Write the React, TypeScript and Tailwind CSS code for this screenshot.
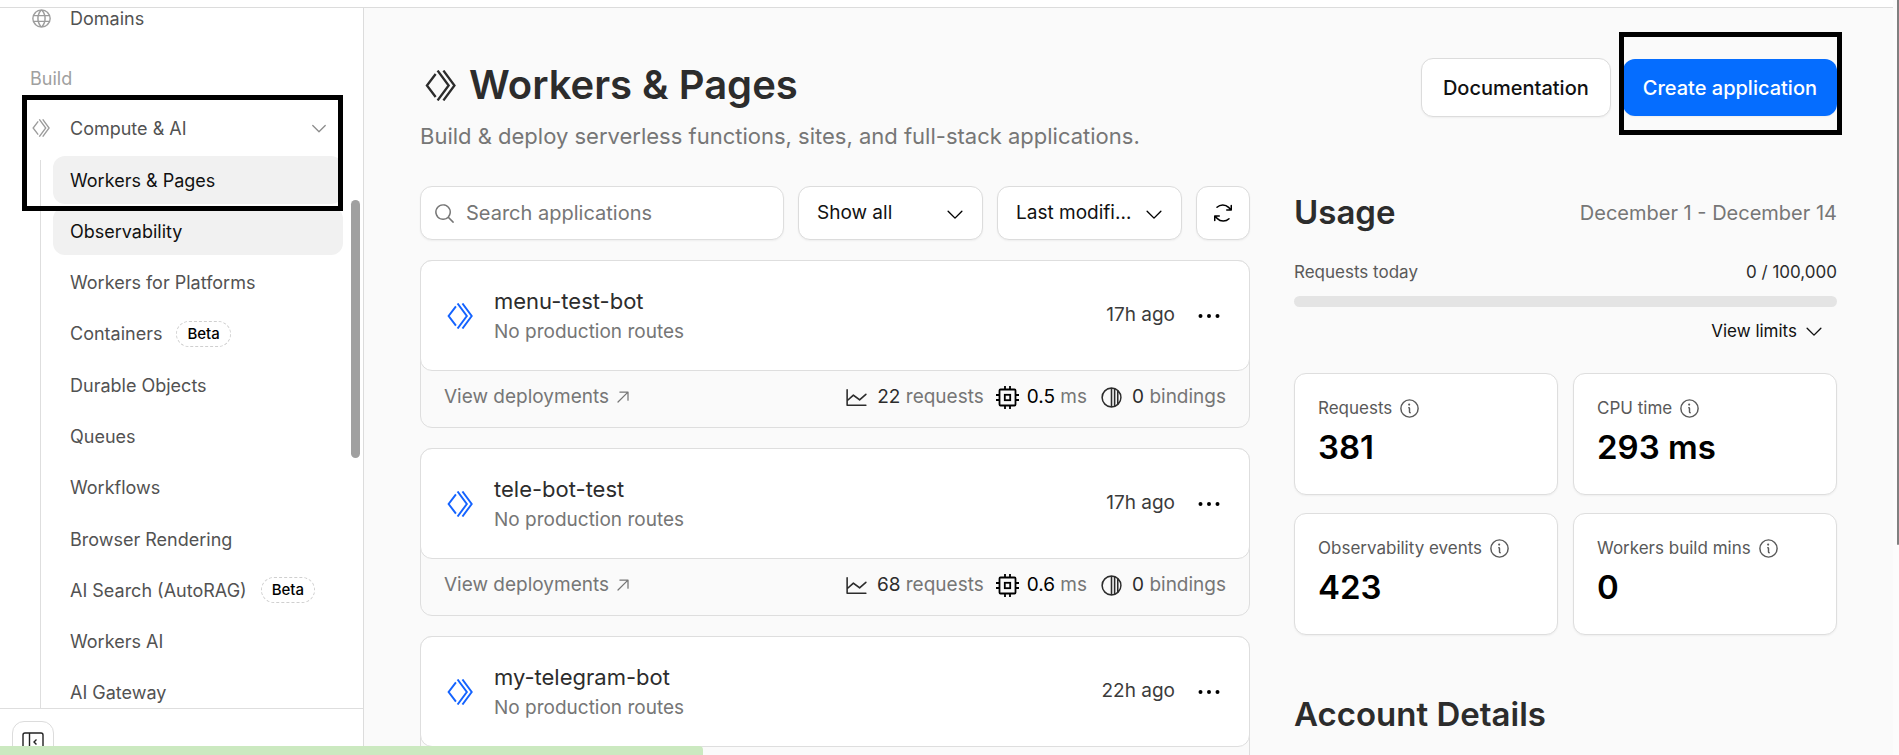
import {
    PiArrowsClockwise,
    PiArrowUpRight,
    PiCaretDown,
    PiChartLine,
    PiCircleHalf,
    PiDotsThreeBold,
    PiGlobe,
    PiInfo,
    PiMagnifyingGlass,
} from 'react-icons/pi';

type NavItem = { label: string; active?: boolean; beta?: boolean };

const NAV_ITEMS: NavItem[] = [
    { label: 'Workers & Pages', active: true },
    { label: 'Observability', active: true },
    { label: 'Workers for Platforms' },
    { label: 'Containers', beta: true },
    { label: 'Durable Objects' },
    { label: 'Queues' },
    { label: 'Workflows' },
    { label: 'Browser Rendering' },
    { label: 'AI Search (AutoRAG)', beta: true },
    { label: 'Workers AI' },
    { label: 'AI Gateway' },
];

type WorkerApp = {
    name: string;
    modified: string;
    metrics?: { requests: string; cpu: string; bindings: string };
};

const APPS: WorkerApp[] = [
    { name: 'menu-test-bot', modified: '17h ago', metrics: { requests: '22', cpu: '0.5', bindings: '0' } },
    { name: 'tele-bot-test', modified: '17h ago', metrics: { requests: '68', cpu: '0.6', bindings: '0' } },
    { name: 'my-telegram-bot', modified: '22h ago' },
];

const STATS = [
    { label: 'Requests', value: '381' },
    { label: 'CPU time', value: '293 ms' },
    { label: 'Observability events', value: '423' },
    { label: 'Workers build mins', value: '0' },
];

function WorkersIcon({ className }: { className?: string }) {
    return (
        <svg className={className} viewBox="0 0 32 32" fill="none" stroke="currentColor" strokeWidth={2.4} aria-hidden="true">
            <path d="M11 4.2 2 16l9 11.8" />
            <path d="M13 .6 24.4 16 13 31.4" />
            <path d="M19 .6 30.4 16 19 31.4" />
        </svg>
    );
}

function CpuIcon() {
    return (
        <svg className="size-[23px]" viewBox="0 0 23 23" fill="none" stroke="#000" strokeWidth={1.8} aria-hidden="true">
            <rect x="3.5" y="3.5" width="16" height="16" rx="1" />
            <rect x="8.8" y="8.8" width="5.4" height="5.4" />
            <path d="M9 0v3.5M14 0v3.5M9 19.5V23M14 19.5V23M0 9h3.5M0 14h3.5M19.5 9H23M19.5 14H23" />
        </svg>
    );
}

function Sidebar() {
    return (
        <aside className="relative flex w-[364px] shrink-0 flex-col border-r border-[#dcdcdc] bg-white">
            <nav className="min-h-0 flex-1 overflow-hidden text-[18px] text-[#525252]">
                <a href="#domains" className="-mt-[14px] flex h-12 items-center pl-[30px]">
                    <PiGlobe className="size-[23px] text-[#9c9c9c]" />
                    <span className="ml-[17px]">Domains</span>
                </a>

                <div className="relative mt-[23px]">
                    <p className="mb-[11px] pl-[30px] leading-7 text-[#a0a0a0]">Build</p>
                    <button type="button" className="flex h-12 w-full items-center pr-[34px] pl-8 text-left">
                        <WorkersIcon className="size-[18px] text-[#9c9c9c]" />
                        <span className="ml-5 flex-1">Compute &amp; AI</span>
                        <PiCaretDown className="size-5 text-[#8c8c8c]" />
                    </button>

                    <ul className="relative mt-1 flex h-[561px] flex-col justify-between pr-5 pl-[53px]">
                        <li className="absolute top-1 bottom-0 left-10 w-px bg-[#dedede]" aria-hidden="true" />
                        {NAV_ITEMS.map((item) => (
                            <li key={item.label}>
                                <a
                                    href="#nav"
                                    className={`flex h-12 items-center rounded-xl pl-[17px] ${item.active ? 'bg-[#f1f1f1] text-[#111]' : ''}`}
                                >
                                    {item.label}
                                    {item.beta && (
                                        <span className="ml-[14px] rounded-full border border-dashed border-[#cfcfcf] px-[10px] text-[15px] leading-6 font-medium text-black">
                                            Beta
                                        </span>
                                    )}
                                </a>
                            </li>
                        ))}
                    </ul>

                    {/* Highlight frame */}
                    <div className="pointer-events-none absolute top-[30px] left-[22px] h-[116px] w-[321px] border-5 border-black" />
                </div>
            </nav>

            <div className="absolute top-48 right-[3px] h-[258px] w-[9px] rounded-full bg-[#a0a0a0]" />

            <div className="h-[47px] overflow-hidden border-t border-[#dedede] pt-3 pl-3">
                <button
                    type="button"
                    aria-label="Collapse sidebar"
                    className="flex size-[42px] items-center justify-center rounded-xl border border-[#dcdcdc]"
                >
                    <svg className="size-[22px]" viewBox="0 0 22 22" fill="none" stroke="#222" strokeWidth={1.4}>
                        <rect x="1" y="2" width="20" height="18" rx="2" />
                        <path d="M7.5 2v18M14.5 8.5 12 11l2.5 2.5" />
                    </svg>
                </button>
            </div>
        </aside>
    );
}

function AppCard({ app }: { app: WorkerApp }) {
    return (
        <article className="rounded-xl border border-[#dedede]">
            <div className="-mx-px -mt-px flex h-[111px] items-center rounded-xl border border-[#dedede] bg-white pr-6 pl-[26px]">
                <WorkersIcon className="size-[26px] shrink-0 text-[#1463ff]" />
                <div className="ml-[21px] flex-1">
                    <h3 className="text-[22px] leading-8 text-[#2c2c2c]">{app.name}</h3>
                    <p className="text-[19px] leading-[30px] text-[#767676]">No production routes</p>
                </div>
                <span className="text-[19px] text-[#3b3b3b]">{app.modified}</span>
                <button type="button" aria-label={`Options for ${app.name}`} className="ml-[18px]">
                    <PiDotsThreeBold className="size-8" />
                </button>
            </div>
            <div className="flex h-14 items-center justify-between px-[23px] pb-1 text-[19px] text-[#767676]">
                {app.metrics && (
                    <>
                        <a href="#deployments" className="flex items-center gap-1">
                            View deployments
                            <PiArrowUpRight className="size-5" />
                        </a>
                        <div className="flex items-center gap-3">
                            <span className="flex items-center gap-2">
                                <PiChartLine className="size-[25px] text-[#2c2c2c]" />
                                <span><span className="text-[#2c2c2c]">{app.metrics.requests}</span> requests</span>
                            </span>
                            <span className="flex items-center gap-2">
                                <CpuIcon />
                                <span><span className="text-black">{app.metrics.cpu}</span> ms</span>
                            </span>
                            <span className="flex items-center gap-2">
                                <PiCircleHalf className="size-[25px] text-[#2c2c2c]" />
                                <span><span className="text-[#2c2c2c]">{app.metrics.bindings}</span> bindings</span>
                            </span>
                        </div>
                    </>
                )}
            </div>
        </article>
    );
}

function SelectBox({ label, value }: { label: string; value: string }) {
    return (
        <div className="relative w-[185px]">
            <select
                aria-label={label}
                className="h-[54px] w-full appearance-none truncate rounded-xl border border-[#dcdcdc] bg-white pr-12 pl-[18px] text-[19px] text-[#111] shadow-xs"
            >
                <option>{value}</option>
            </select>
            <PiCaretDown className="pointer-events-none absolute top-[17px] right-[17px] size-[22px]" />
        </div>
    );
}

function Usage() {
    return (
        <section>
            <div className="flex h-[54px] items-center justify-between">
                <h2 className="text-[33px] font-semibold text-[#2c2c2c]">Usage</h2>
                <span className="text-[20px] text-[#767676]">December 1 - December 14</span>
            </div>
            <div className="mt-[18px] flex justify-between text-[17px] leading-7">
                <span className="text-[#595959]">Requests today</span>
                <span className="text-[#2c2c2c]">0 / 100,000</span>
            </div>
            <div className="mt-[10px] h-[11px] rounded-full bg-[#e4e4e4]" />
            <div className="mt-[10px] flex justify-end pr-3">
                <button type="button" className="flex items-center gap-[6px] text-[17px] leading-7 text-[#111]">
                    View limits
                    <PiCaretDown className="size-[22px]" />
                </button>
            </div>
            <dl className="mt-7 grid grid-cols-2 gap-x-[15px] gap-y-[18px]">
                {STATS.map((stat) => (
                    <div key={stat.label} className="h-[122px] rounded-xl border border-[#dedede] bg-white px-[23px] pt-5 shadow-xs">
                        <dt className="flex items-center gap-[6px] text-[17px] leading-7 text-[#595959]">
                            {stat.label}
                            <PiInfo className="size-[23px]" />
                        </dt>
                        <dd className="text-[33px] leading-[50px] font-semibold text-black">{stat.value}</dd>
                    </div>
                ))}
            </dl>
            <h2 className="mt-14 text-[33px] leading-[46px] font-semibold text-[#2c2c2c]">Account Details</h2>
        </section>
    );
}

export default function App() {
    return (
        <div className="relative flex h-screen flex-col overflow-hidden bg-white pt-[7px] font-['Inter','Liberation_Sans',sans-serif]">
            <div className="flex min-h-0 flex-1 border-t border-[#dcdcdc]">
                <Sidebar />

                <main className="min-w-0 flex-1 overflow-hidden bg-[#fafafa] pt-[50px] pr-[62px] pl-14">
                    <header className="flex items-start justify-between">
                        <div>
                            <h1 className="flex items-center text-[40px] leading-[54px] font-semibold text-[#2c2c2c]">
                                <WorkersIcon className="mr-[13px] ml-[5px] size-[31px]" />
                                Workers &amp; Pages
                            </h1>
                            <p className="mt-2 text-[22px] leading-8 text-[#767676]">
                                Build &amp; deploy serverless functions, sites, and full-stack applications.
                            </p>
                        </div>
                        <div className="flex items-center gap-3">
                            <a
                                href="#docs"
                                className="flex h-[59px] items-center rounded-xl border border-[#dcdcdc] bg-white px-[21px] text-[20px] font-medium text-[#111] shadow-xs"
                            >
                                Documentation
                            </a>
                            <div className="relative">
                                <button
                                    type="button"
                                    className="h-[57px] rounded-xl bg-[#056dff] px-5 text-[20px] font-medium text-white shadow-xs"
                                >
                                    Create application
                                </button>
                                {/* Highlight frame */}
                                <div className="pointer-events-none absolute -top-[27px] -right-[5px] -bottom-[19px] -left-1 border-5 border-black" />
                            </div>
                        </div>
                    </header>

                    <div className="mt-[34px] grid grid-cols-[minmax(0,1fr)_543px] gap-11">
                        <section>
                            <div className="flex gap-[14px]">
                                <label className="flex h-[54px] min-w-0 flex-1 items-center rounded-xl border border-[#dedede] bg-white pl-3 shadow-xs">
                                    <PiMagnifyingGlass className="size-[23px] shrink-0 text-[#767676]" />
                                    <input
                                        type="search"
                                        aria-label="Search applications"
                                        placeholder="Search applications"
                                        className="ml-[10px] min-w-0 flex-1 text-[20px] outline-none placeholder:text-[#767676]"
                                    />
                                </label>
                                <SelectBox label="Filter" value="Show all" />
                                <SelectBox label="Sort by" value="Last modified" />
                                <button
                                    type="button"
                                    aria-label="Refresh"
                                    className="flex size-[54px] items-center justify-center rounded-xl border border-[#dcdcdc] bg-white shadow-xs"
                                >
                                    <PiArrowsClockwise className="size-6" />
                                </button>
                            </div>
                            <div className="mt-5 flex flex-col gap-5">
                                {APPS.map((app) => (
                                    <AppCard key={app.name} app={app} />
                                ))}
                            </div>
                        </section>
                        <Usage />
                    </div>
                </main>
            </div>

            {/* Page scrollbar and loading bar */}
            <div className="absolute inset-y-0 right-0 flex w-[6px] justify-end bg-[#fcfcfc]">
                <div className="h-[545px] w-[2px] rounded-b-full bg-[#808080]" />
            </div>
            <div className="absolute bottom-0 left-0 h-[9px] w-[37%] rounded-tr bg-[#cbe9c0]" />
        </div>
    );
}
